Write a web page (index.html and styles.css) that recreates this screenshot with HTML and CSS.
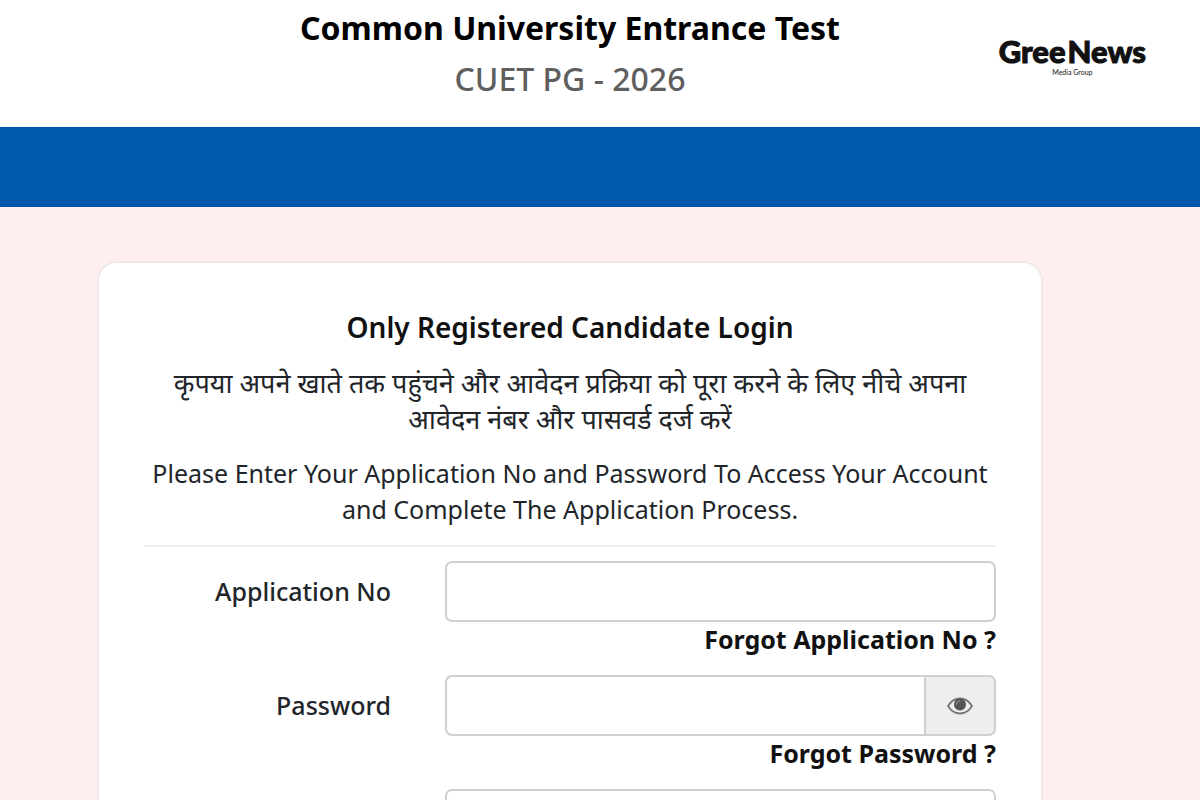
FILE: index.html
```html
<!DOCTYPE html>
<html lang="en">
<head>
    <meta charset="UTF-8">
    <meta name="viewport" content="width=device-width, initial-scale=1.0">
    <title>CUET PG - 2026 Login</title>
    <link rel="stylesheet" href="styles.css">
</head>
<body>
    <header class="header">
        <div class="header__titles">
            <h1 class="title">Common University Entrance Test</h1>
            <p class="subtitle">CUET PG - 2026</p>
        </div>
        <a class="brand" href="#">
            <span class="brand__name"><span>Gree</span><span>News</span></span>
            <span class="brand__group">Media Group</span>
        </a>
    </header>
    <div class="navbar"></div>
    <main class="main">
        <form class="card">
            <h2 class="card__title">Only Registered Candidate Login</h2>
            <p class="hint hint--hindi" lang="hi">कृपया अपने खाते तक पहुंचने और आवेदन प्रक्रिया को पूरा करने के लिए नीचे अपना आवेदन नंबर और पासवर्ड दर्ज करें</p>
            <p class="hint">Please Enter Your Application No and Password To Access Your Account and Complete The Application Process.</p>
            <div class="fields">
                <div class="row">
                    <label class="label" for="application">Application No</label>
                    <div class="field">
                        <input class="input" id="application" type="text">
                        <a class="forgot" href="#">Forgot Application No ?</a>
                    </div>
                </div>
                <div class="row">
                    <label class="label" for="password">Password</label>
                    <div class="field">
                        <div class="group">
                            <input class="input input--group" id="password" type="password">
                            <button class="eye" type="button" aria-label="Show password">
                                <svg width="26" height="18" viewBox="0 0 26 18">
                                    <path d="M1 9C4 4 8.500 1.500 13 1.500S22 4 25 9c-3 5-7.500 7.500-12 7.500S4 14 1 9z" fill="#eee" stroke="#777" stroke-width="1.800"/>
                                    <circle cx="13" cy="7.500" r="6" fill="#555"/>
                                    <path d="M9.500 7.500c0-2 1.500-3.500 3.500-3.500" fill="none" stroke="#aaa" stroke-width="1"/>
                                </svg>
                            </button>
                        </div>
                        <a class="forgot" href="#">Forgot Password ?</a>
                    </div>
                </div>
                <div class="row">
                    <div class="field">
                        <input class="input" type="text" aria-label="Security Pin">
                    </div>
                </div>
            </div>
        </form>
    </main>
</body>
</html>
```

FILE: styles.css
```css
*{
    padding: 0;
    margin: 0;
    box-sizing: border-box;
}
body{
    font-family: "Noto Sans", "Open Sans", sans-serif;
    color: #212529;
    background-color: #ffeeee;
}
.header{
    display: grid;
    grid-template-columns: 95%;
    height: 127px;
    background-color: white;
    position: relative;
}
.header__titles{
    padding-top: 4px;
    text-align: center;
}
.title{
    color: black;
    font-size: 32px;
    font-weight: 700;
    line-height: 48px;
}
.subtitle{
    color: #5f5f5f;
    font-size: 32px;
    font-weight: 500;
    line-height: 54px;
}
.brand{
    position: absolute;
    top: 34px;
    right: 54px;
    display: flex;
    flex-direction: column;
    align-items: center;
    color: #111;
    font-family: Lato, sans-serif;
    text-decoration: none;
}
.brand__name{
    display: flex;
    gap: 2px;
    font-size: 31px;
    font-weight: 900;
    line-height: 34px;
    -webkit-text-stroke: 1px #111;
}
.brand__group{
    font-size: 7px;
    line-height: 8px;
}
.navbar{
    height: 80px;
    background-color: #0058aa;
}
.main{
    width: 95%;
    padding: 54px 97px 0;
}
.card{
    padding: 44px 45px;
    background-color: white;
    border: 2px solid #f0e8e8;
    border-bottom: 0;
    border-radius: 20px 20px 0 0;
}
.card__title{
    color: #111;
    font-size: 28px;
    font-weight: 600;
    line-height: 40px;
    text-align: center;
}
.hint{
    margin-top: 18px;
    font-size: 25px;
    line-height: 36px;
    text-align: center;
}
.hint--hindi{
    font-size: 27px;
}
.fields{
    margin-top: 18px;
    padding-top: 14px;
    border-top: 2px solid #f0f0f0;
}
.row{
    display: flex;
    justify-content: flex-end;
}
.label{
    flex: 1;
    padding-right: 54px;
    font-size: 25px;
    font-weight: 500;
    line-height: 60px;
    text-align: right;
}
.field{
    width: 551px;
    text-align: right;
}
.input{
    display: block;
    width: 100%;
    height: 61px;
    padding: 0 16px;
    border: 2px solid #d0d0d0;
    border-radius: 7px;
    background-color: white;
    font-size: 25px;
}
.group{
    display: flex;
}
.input--group{
    flex: 1;
    min-width: 0;
    border-right: 0;
    border-radius: 7px 0 0 7px;
}
.eye{
    display: flex;
    align-items: center;
    justify-content: center;
    width: 72px;
    border: 2px solid #d0d0d0;
    border-radius: 0 7px 7px 0;
    background-color: #eee;
    cursor: pointer;
}
.forgot{
    display: block;
    margin-bottom: 19px;
    color: #111;
    font-size: 25px;
    font-weight: 700;
    line-height: 34px;
    text-decoration: none;
}
```
